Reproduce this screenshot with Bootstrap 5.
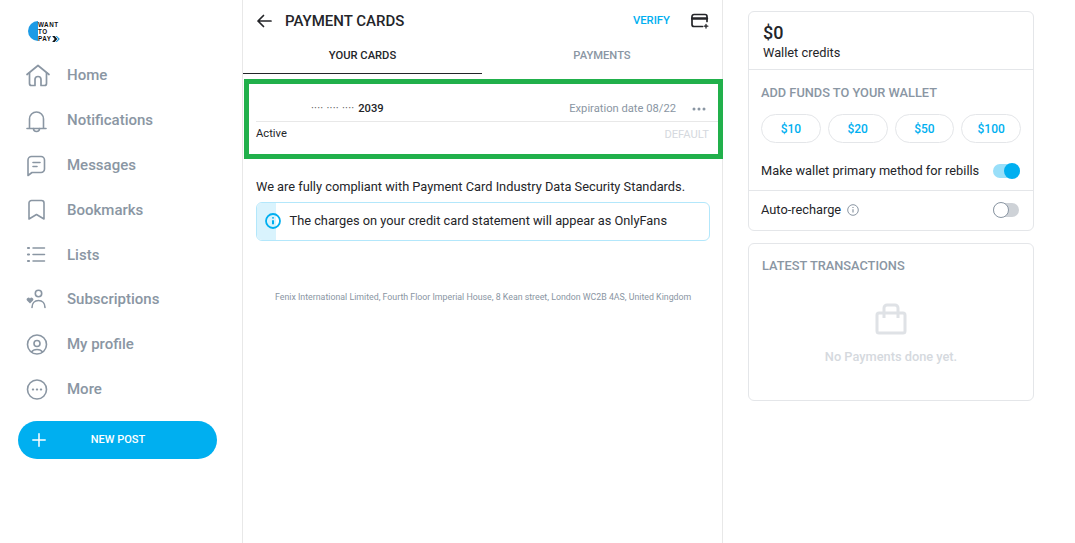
<!DOCTYPE html>
<html lang="en"><head><meta charset="utf-8"><title>Payment cards</title>
<link href="https://cdn.jsdelivr.net/npm/bootstrap@5.3.0/dist/css/bootstrap.min.css" rel="stylesheet">
<style>
html,body{height:543px;overflow:hidden}
body{font-family:Roboto,"Liberation Sans",sans-serif;color:#242529;font-size:12.8px;background:#fff}
.shell{height:543px}
.side{width:242px;padding:18px 0 0 18px;flex:none}
.brand{height:28px;margin-left:10px;margin-bottom:7px}
.brand-dot{width:10px;height:20px;background:#1c9be6;border-radius:10px 0 0 10px;margin-top:3px;flex:none}
.brand-txt{font-family:"Liberation Sans",sans-serif;font-size:6.3px;line-height:7.200px;font-weight:700;color:#111;margin-top:3px;letter-spacing:.5px;position:relative}
.brand-arrow{position:absolute;left:14px;top:15px}
.nav-row{height:44.85px;color:#8a96a3;font-weight:500;font-size:15px;text-decoration:none}
.nav-ico{width:39px;height:25px;margin-left:8px;margin-right:2px;flex:none;color:#8a96a3}
.ico-home{margin-left:7px;width:26px;margin-right:16px}
.post-btn{width:199px;height:38px;margin-top:9px;background:#00aff0;border-radius:19px;color:#fff;font-size:11px;font-weight:500;border:0;padding:0 0 0 14px}
.post-btn span{flex:1;text-align:center;padding-right:27px}
.mid{width:481px;border-left:1px solid #e8e8e8;border-right:1px solid #e8e8e8;flex:none}
.top-bar{height:42px;padding:0 13px}
.top-bar h1{font-size:15px;font-weight:500;margin:0 0 0 12px;color:#242529}
.verify{font-size:11.300px;font-weight:500;color:#00aff0;text-decoration:none;margin-right:21px}
.tabbar{height:32px}
.tab-it{flex:1;font-size:11.200px;font-weight:500;text-align:center;padding-top:6px;color:#8a96a3}
.tab-it.on{flex:none;width:239px;color:#242529;border-bottom:1px solid #242529}
.hl{margin:5px -1px 0 1px;height:80px;border:5px solid #21b04b;padding:13px 0 0 7px}
.card-top{height:25px;border-bottom:1px solid #e8e8e8;font-size:11.200px;color:#8a96a3}
.dotsnum{padding-left:55px;color:#242529}
.dotsnum b{font-weight:500;font-size:11.200px;margin-left:1px}
.dotsnum i{font-style:normal;color:#555;letter-spacing:.2px}
.more-d{margin:0 12px 0 16px;width:14px}
.card-bot{font-size:11.200px;padding-top:4px}
.def{font-size:11.200px;color:#d5d9de;margin-right:9px;padding-top:1px}
.body-pad{padding:19px 12px 0 13px}
.comply{font-size:12.800px;line-height:18px;margin:0 0 6px;white-space:nowrap}
.note{height:39px;border:1px solid #b3e7fb;border-radius:6px;overflow:hidden}
.note-ic{width:19px;background:#d9f3fd;height:100%;flex:none;position:relative}
.note-ic svg{position:absolute;left:8px;top:10px}
.note-t{margin-left:13.500px;padding-bottom:2px;white-space:nowrap}
.legal{font-size:8.800px;color:#8a96a3;margin-top:50px;padding-left:19px;white-space:nowrap}
.right{padding:11px 0 0 25px;width:311px;flex:none}
.panel{border:1px solid #e4e6e9;border-radius:6px;width:286px}
.p-head{height:58px;padding:9px 14px 0;border-bottom:1px solid #e4e6e9}
.amt{font-size:18px;font-weight:500;line-height:24px}
.wl{line-height:16px}
.p-sec{padding:14px 12px 0;height:121px;border-bottom:1px solid #e4e6e9}
.cap{font-size:12.800px;font-weight:500;color:#8a96a3;line-height:18px}
.fund-row{gap:7px;margin-top:12px}
.fund{flex:1;height:29px;border:1px solid #e4e6e9;border-radius:15px;background:#fff;color:#00aff0;font-size:12px;font-weight:500;padding:0}
.optrow{margin-top:19px;line-height:18px;white-space:nowrap;padding-right:1px}
.tog{width:27px;height:14px;border-radius:7px;position:relative;flex:none}
.tog.on{background:#99dff9}
.tog.off{background:#ced2d7;margin-right:1px;width:26px}
.knob{position:absolute;top:-1px;width:16px;height:16px;border-radius:50%}
.tog.on .knob{right:0;background:#00aff0}
.tog.off .knob{left:0;background:#fff;border:1px solid #8a96a3}
.auto{height:39px;padding:0 13px 1px 12px}
.info-i{margin-left:6px}
.trans{margin-top:12px;height:158px;padding:13px 13px 0;text-align:center}
.trans .cap{text-align:left}
.empty-i{display:block;margin:28px auto 0}
.empty-t{color:#d5d9de;font-size:12.800px;font-weight:500;margin-top:12px}
</style></head>
<body>
<div class="shell d-flex">
  <aside class="side">
    <div class="brand d-flex">
      <div class="brand-dot"></div>
      <div class="brand-txt">WANT<br>TO<br>PAY
        <svg class="brand-arrow" width="8" height="6" viewBox="0 0 9 7"><path d="M0 0h3l3 3.500L3 7H0l3-3.500z" fill="#111"/><path d="M4 0h1.500L9 3.500 5.500 7H4l3-3.500z" fill="#1c9be6"/></svg>
      </div>
    </div>
    <nav class="d-flex flex-column">
      <a class="nav-row d-flex align-items-center" href="#"><svg class="nav-ico ico-home" viewBox="0 0 26 25" fill="none" stroke="currentColor" stroke-width="1.700" stroke-linejoin="round" stroke-linecap="round"><path d="M2 11.500 13 2.500l11 9"/><path d="M4.500 10v10.500a2 2 0 0 0 2 2H10v-6a3 3 0 0 1 6 0v6h3.500a2 2 0 0 0 2-2V10"/></svg><span>Home</span></a>
      <a class="nav-row d-flex align-items-center" href="#"><svg class="nav-ico" viewBox="0 0 39 25" fill="none" stroke="currentColor" stroke-width="1.600" stroke-linecap="round" stroke-linejoin="round"><path d="M3.500 20V11a7 7 0 0 1 14 0v9"/><path d="M1 20.500h19"/><path d="M7.500 20.500a3 3 0 0 0 6 0"/></svg><span>Notifications</span></a>
      <a class="nav-row d-flex align-items-center" href="#"><svg class="nav-ico" viewBox="0 0 39 25" fill="none" stroke="currentColor" stroke-width="1.600" stroke-linecap="round" stroke-linejoin="round"><path d="M2 22.500V7a3.500 3.500 0 0 1 3.500-3.500h9.500A3.500 3.500 0 0 1 18.500 7v9a3.500 3.500 0 0 1-3.500 3.500H6z"/><path d="M7 9.500h7M7 13.500h4"/></svg><span>Messages</span></a>
      <a class="nav-row d-flex align-items-center" href="#"><svg class="nav-ico" viewBox="0 0 39 25" fill="none" stroke="currentColor" stroke-width="1.600" stroke-linecap="round" stroke-linejoin="round"><path d="M3 22V6a2.500 2.500 0 0 1 2.500-2.500h10A2.500 2.500 0 0 1 18 6v16l-7.500-4.500z"/></svg><span>Bookmarks</span></a>
      <a class="nav-row d-flex align-items-center" href="#"><svg class="nav-ico" viewBox="0 0 39 25" fill="none" stroke="currentColor" stroke-width="1.500" stroke-linecap="round"><path d="M7 6h11.500M7 12.500h11.500M7 19h11.500"/><path d="M2 6h1M2 12.500h1M2 19h1" stroke-width="2.200"/></svg><span>Lists</span></a>
      <a class="nav-row d-flex align-items-center" href="#"><svg class="nav-ico" viewBox="0 0 39 25" fill="none" stroke="currentColor" stroke-width="1.600" stroke-linecap="round"><circle cx="12.500" cy="6.500" r="3.200"/><path d="M6 20.500c0-4 2.500-7 6.500-7s6.500 3 6.500 7"/><path d="M4 16.500 1 13.500a1.800 1.800 0 0 1 3-2.100 1.800 1.800 0 0 1 3 2.100z" fill="currentColor" stroke="none"/></svg><span>Subscriptions</span></a>
      <a class="nav-row d-flex align-items-center" href="#"><svg class="nav-ico" viewBox="0 0 39 25" fill="none" stroke="currentColor" stroke-width="1.600" stroke-linecap="round"><circle cx="11" cy="12.500" r="9.500"/><circle cx="11" cy="11.500" r="3"/><path d="M5.500 20c1-1.700 3-2.500 5.500-2.500s4.500.8 5.500 2.500"/></svg><span>My profile</span></a>
      <a class="nav-row d-flex align-items-center" href="#"><svg class="nav-ico" viewBox="0 0 39 25" fill="none" stroke="currentColor" stroke-width="1.600" stroke-linecap="round"><circle cx="11" cy="12.500" r="9.500"/><path d="M6.800 12.500h.4M10.800 12.500h.4M14.800 12.500h.4" stroke-width="2"/></svg><span>More</span></a>
    </nav>
    <button class="post-btn d-flex align-items-center" type="button"><svg width="14" height="14" viewBox="0 0 14 14" fill="none" stroke="#fff" stroke-width="1.500" stroke-linecap="round"><path d="M7 .800v12.400M.800 7h12.400"/></svg><span>NEW POST</span></button>
  </aside>

  <main class="mid">
    <div class="top-bar d-flex align-items-center">
      <svg width="17" height="14" viewBox="0 0 17 14" fill="none" stroke="#242529" stroke-width="1.700" stroke-linecap="round" stroke-linejoin="round"><path d="M15 7H2M7.500 1.500 2 7l5.500 5.500"/></svg>
      <h1>PAYMENT CARDS</h1>
      <a class="verify ms-auto" href="#">VERIFY</a>
      <svg width="18" height="16" viewBox="0 0 18 16" fill="none" stroke="#242529" stroke-width="1.700" stroke-linecap="round"><path d="M16 8.500V3.500A2 2 0 0 0 14 1.500H3A2 2 0 0 0 1 3.500v8a2 2 0 0 0 2 2h8.500"/><path d="M1 5.500h15" stroke-width="2.400"/><path d="M15 11.500v3.500M13.200 13.200h3.600" stroke-width="1.300"/></svg>
    </div>
    <div class="tabbar d-flex">
      <div class="tab-it on">YOUR CARDS</div>
      <div class="tab-it">PAYMENTS</div>
    </div>
    <div class="hl">
      <div class="card-top d-flex align-items-center">
        <div class="dotsnum"><i>···· ···· ····</i> <b>2039</b></div>
        <div class="ms-auto">Expiration date 08/22</div>
        <svg class="more-d" height="4" viewBox="0 0 14 4" fill="#8a96a3"><circle cx="2" cy="2" r="1.500"/><circle cx="7" cy="2" r="1.500"/><circle cx="12" cy="2" r="1.500"/></svg>
      </div>
      <div class="card-bot d-flex justify-content-between"><span>Active</span><span class="def">DEFAULT</span></div>
    </div>
    <div class="body-pad">
      <p class="comply">We are fully compliant with Payment Card Industry Data Security Standards.</p>
      <div class="note d-flex align-items-center">
        <div class="note-ic"><svg width="16" height="16" viewBox="0 0 16 16" fill="none" stroke="#00aff0"><circle cx="8" cy="8" r="7" stroke-width="1.800"/><path d="M8 7.200v4" stroke-width="2"/><path d="M8 4.300v1.200" stroke-width="2"/></svg></div>
        <div class="note-t">The charges on your credit card statement will appear as OnlyFans</div>
      </div>
      <div class="legal">Fenix International Limited, Fourth Floor Imperial House, 8 Kean street, London WC2B 4AS, United Kingdom</div>
    </div>
  </main>

  <aside class="right">
    <section class="panel">
      <div class="p-head"><div class="amt">$0</div><div class="wl">Wallet credits</div></div>
      <div class="p-sec">
        <div class="cap">ADD FUNDS TO YOUR WALLET</div>
        <div class="fund-row d-flex">
          <button class="fund" type="button">$10</button><button class="fund" type="button">$20</button><button class="fund" type="button">$50</button><button class="fund" type="button">$100</button>
        </div>
        <div class="optrow d-flex justify-content-between align-items-center"><span>Make wallet primary method for rebills</span><div class="tog on"><div class="knob"></div></div></div>
      </div>
      <div class="auto d-flex align-items-center">
        <span>Auto-recharge</span>
        <svg class="info-i" width="12" height="12" viewBox="0 0 12 12" fill="none" stroke="#8a96a3"><circle cx="6" cy="6" r="5.300"/><path d="M6 5.300v3.200M6 3v1" stroke-width="1.200"/></svg>
        <div class="tog off ms-auto"><div class="knob"></div></div>
      </div>
    </section>
    <section class="panel trans">
      <div class="cap">LATEST TRANSACTIONS</div>
      <svg class="empty-i" width="32" height="32" viewBox="0 0 32 32" fill="none" stroke="#dfe2e6" stroke-width="3" stroke-linejoin="round"><rect x="2" y="10" width="28" height="20" rx="2"/><path d="M9 15V5a3 3 0 0 1 3-3h8a3 3 0 0 1 3 3v10"/></svg>
      <div class="empty-t">No Payments done yet.</div>
    </section>
  </aside>
</div>
</body></html>
